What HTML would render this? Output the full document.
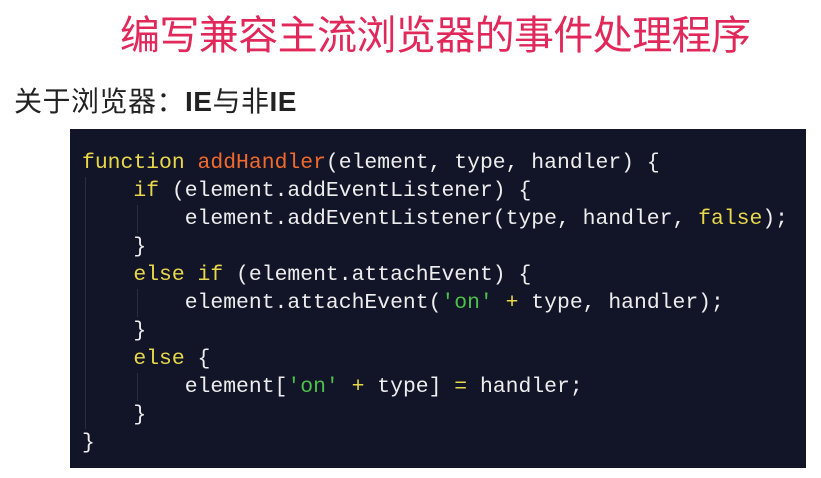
<!DOCTYPE html>
<html><head><meta charset="utf-8"><style>
body{margin:0;width:821px;height:478px;background:#fff;position:relative;overflow:hidden;font-family:"Liberation Sans","Noto Sans CJK SC",sans-serif}
.t{position:absolute;left:120px;top:10px;font-size:40px;color:#e0285a;letter-spacing:-0.6px;white-space:nowrap;line-height:52px}
.s{position:absolute;left:14px;top:85px;font-size:28px;color:#222;line-height:34px;white-space:nowrap;letter-spacing:0.5px}
.s b{font-weight:bold}
.box{position:absolute;left:70px;top:129px;width:736px;height:339px;background:#121427}
pre{position:absolute;left:82px;top:149px;margin:0;font-family:"Liberation Mono",monospace;font-size:21.4px;line-height:28px;color:#eeeeee}
.k{color:#e8d84a}.f{color:#f26a2c}.g{color:#4cc04a}
.g1{position:absolute;width:1px;background:#2a2d40}
</style></head><body>
<div class="t">编写兼容主流浏览器的事件处理程序</div>
<div class="s">关于浏览器：<b>IE</b>与非<b>IE</b></div>
<div class="box"></div>
<div class="g1" style="left:85px;top:177px;height:252px"></div>
<div class="g1" style="left:137px;top:205px;height:28px"></div>
<div class="g1" style="left:137px;top:289px;height:28px"></div>
<div class="g1" style="left:137px;top:373px;height:28px"></div>
<pre><span class="k">function</span> <span class="f">addHandler</span>(element, type, handler) {
    <span class="k">if</span> (element.addEventListener) {
        element.addEventListener(type, handler, <span class="k">false</span>);
    }
    <span class="k">else if</span> (element.attachEvent) {
        element.attachEvent(<span class="g">'on'</span> <span class="k">+</span> type, handler);
    }
    <span class="k">else</span> {
        element[<span class="g">'on'</span> <span class="k">+</span> type] <span class="k">=</span> handler;
    }
}</pre>
</body></html>
